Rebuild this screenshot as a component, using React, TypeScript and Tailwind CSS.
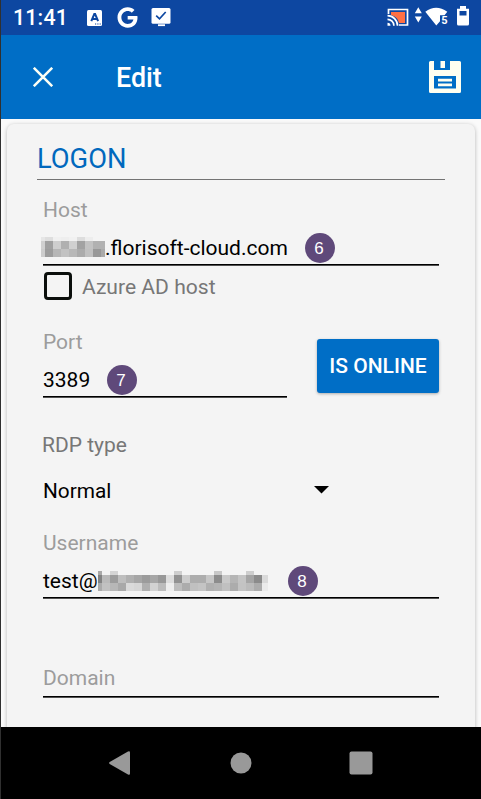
import React from "react";
import { FaGoogle } from "react-icons/fa";

type Cell = [number, number, number, number, string];

const hostCells: Cell[] = [
  [0, 0, 4, 4, "#e6e6e6"], [4, 0, 8, 4, "#dedede"], [12, 0, 8, 4, "#f0f0f0"], [20, 0, 8, 4, "#eeeeee"],
  [28, 0, 8, 4, "#f1f1f1"], [36, 0, 8, 4, "#dddddd"], [44, 0, 8, 4, "#ededed"],
  [0, 4, 4, 8, "#d0d0d0"], [4, 4, 8, 8, "#a0a0a0"], [12, 4, 8, 8, "#cecece"], [20, 4, 8, 8, "#b0b0b0"],
  [28, 4, 8, 8, "#d0d0d0"], [36, 4, 8, 8, "#a2a2a2"], [44, 4, 8, 8, "#c2c2c2"], [52, 4, 12, 8, "#b1b1b1"],
  [0, 12, 4, 8, "#cccccc"], [4, 12, 8, 8, "#9c9c9c"], [12, 12, 8, 8, "#b6b6b6"], [20, 12, 8, 8, "#c2c2c2"],
  [28, 12, 8, 8, "#b8b8b8"], [36, 12, 8, 8, "#ababab"], [44, 12, 8, 8, "#c0c0c0"], [52, 12, 8, 8, "#989898"],
  [60, 12, 4, 8, "#aaaaaa"],
];

const userCells: Cell[] = [
  [0, 0, 4, 4, "#a9a9a9"], [12, 0, 8, 4, "#d4d4d4"], [76, 0, 8, 4, "#cecece"], [116, 0, 8, 4, "#c8c8c8"], [148, 0, 8, 4, "#cecece"],
  [0, 4, 4, 8, "#838383"], [4, 4, 8, 8, "#bababa"], [12, 4, 8, 8, "#9c9c9c"], [20, 4, 8, 8, "#bebebe"],
  [28, 4, 8, 8, "#b0b0b0"], [36, 4, 8, 8, "#a6a6a6"], [44, 4, 8, 8, "#9b9b9b"], [52, 4, 8, 8, "#a6a6a6"],
  [60, 4, 8, 8, "#989898"], [68, 4, 8, 8, "#dddddd"], [76, 4, 8, 8, "#929292"], [84, 4, 8, 8, "#cccccc"],
  [92, 4, 16, 8, "#adadad"], [108, 4, 8, 8, "#c6c6c6"], [116, 4, 8, 8, "#8c8c8c"], [124, 4, 8, 8, "#c9c9c9"],
  [132, 4, 8, 8, "#b5b5b5"], [140, 4, 8, 8, "#c4c4c4"], [148, 4, 8, 8, "#a5a5a5"], [156, 4, 8, 8, "#8b8b8b"],
  [164, 4, 6, 8, "#dadada"],
  [0, 12, 4, 8, "#aaaaaa"], [4, 12, 8, 8, "#c1c1c1"], [12, 12, 8, 8, "#b7b7b7"], [20, 12, 8, 8, "#a9a9a9"],
  [28, 12, 8, 8, "#dadada"], [36, 12, 8, 8, "#d6d6d6"], [44, 12, 8, 8, "#afafaf"], [52, 12, 8, 8, "#d2d2d2"],
  [60, 12, 8, 8, "#bcbcbc"], [68, 12, 8, 8, "#eeeeee"], [76, 12, 8, 8, "#bdbdbd"], [84, 12, 8, 8, "#acacac"],
  [92, 12, 8, 8, "#c0c0c0"], [100, 12, 8, 8, "#c4c4c4"], [108, 12, 8, 8, "#b0b0b0"], [116, 12, 8, 8, "#b4b4b4"],
  [124, 12, 8, 8, "#c0c0c0"], [132, 12, 8, 8, "#acacac"], [140, 12, 8, 8, "#c3c3c3"], [148, 12, 8, 8, "#bbbbbb"],
  [156, 12, 8, 8, "#acacac"], [164, 12, 6, 8, "#ebebeb"],
];

function Mosaic({ cells, width }: { cells: Cell[]; width: number }) {
  return (
    <svg width={width} height="20" shapeRendering="crispEdges" className="shrink-0">
      {cells.map(([x, y, w, h, fill], i) => (
        <rect key={i} x={x} y={y} width={w} height={h} fill={fill} />
      ))}
    </svg>
  );
}

function Badge({ n }: { n: number }) {
  return (
    <span className="flex size-[30px] shrink-0 items-center justify-center rounded-full bg-[#5f497a] pr-px font-['Liberation_Sans',sans-serif] text-[17px] leading-none text-white">
      {n}
    </span>
  );
}

function Label({ children }: { children: React.ReactNode }) {
  return <div className="h-6 text-[21px] leading-6 text-[#9c9c9c]">{children}</div>;
}

function Field({ children }: { children: React.ReactNode }) {
  return (
    <div className="mb-px flex h-[43px] items-center border-b border-black pt-[10px] shadow-[0_1px_0_#505050]">
      {children}
    </div>
  );
}

function StatusBar() {
  return (
    <header className="flex h-[35px] shrink-0 items-center bg-[#0d47a1] pl-3 text-white">
      <span className="w-[74px] whitespace-nowrap text-[21.3px] font-medium leading-none tracking-[0.2px]">11:41</span>
      <svg width="15" height="16" viewBox="0 0 15 16">
        <rect width="15" height="16" rx="1.5" fill="white" />
        <path d="M4.3 11.2 7.3 4h.8l3 7.2M5.6 9h4.2" fill="none" stroke="#0d47a1" strokeWidth="2" />
        <path d="M8 14h1.2M10.3 14h1.2M12.6 14h1.2" stroke="#0d47a1" strokeWidth="1.2" />
      </svg>
      <FaGoogle size={21} className="ml-[15px]" />
      <svg width="20" height="19" viewBox="0 0 20 19" className="ml-[13px]">
        <rect x="0.5" width="19" height="15.7" rx="1.5" fill="white" />
        <path d="m5.2 7.6 3.3 3.2L14.7 4" fill="none" stroke="#0d47a1" strokeWidth="1.7" />
        <path d="M7 17.2h7" stroke="white" strokeWidth="1.8" />
      </svg>
      <svg width="93" height="35" viewBox="380 0 93 35" className="ml-auto mr-2">
        <path d="M388.5 14v-4.5h19v15.5H399" fill="none" stroke="white" strokeWidth="1.7" />
        <path d="M391 12h14v11h-6q-1-6-8-8z" fill="#ff7043" />
        <path d="M387.5 15.7a10 10 0 0 1 10 10M387.5 19.3a6.4 6.4 0 0 1 6.4 6.4" fill="none" stroke="white" strokeWidth="1.7" />
        <path d="M387.5 22.7a3 3 0 0 1 3 3h-3z" fill="white" />
        <path d="m414.8 13.2 3.5-6 3.5 6zM414.8 16.5l3.5 6 3.5-6z" fill="white" />
        <path d="M425.3 11.7Q436 4 447.3 11.7L444.5 15.2H440v6L436.3 25.5z" fill="white" />
        <text x="441.3" y="24" fontSize="11" fontWeight="700" fill="white">5</text>
        <path d="M460 6h6v2.7h3V24q0 1.5-1.5 1.5h-9Q457 25.5 457 24V8.7h3z" fill="white" />
        <path d="M459.5 11h7v4.5h-7z" fill="#0d47a1" />
      </svg>
    </header>
  );
}

function AppBar() {
  return (
    <div className="flex h-[84px] shrink-0 items-center bg-[#006ec6] pl-8 pr-5 text-white">
      <svg width="20" height="20" viewBox="0 0 20 20">
        <path d="m.8.8 18.4 18.4M19.2.8.8 19.2" stroke="#fcfff5" strokeWidth="2.5" />
      </svg>
      <h1 className="ml-[63px] pt-0.5 text-[26.8px] font-medium leading-none">Edit</h1>
      <svg width="32" height="32" viewBox="0 0 32 32" className="ml-auto">
        <path d="M1.5 0H5v9h16V0h9.5Q32 0 32 1.5v29Q32 32 30.5 32h-29Q0 32 0 30.5v-29Q0 0 1.5 0zM5 15v12.5h22V15z" fill="#fffff0" fillRule="evenodd" />
        <path d="M11.5 0H16v7h-4.5zM9 17.8h14v2.7H9zM9 22.5h14v2.7H9z" fill="#fffff0" />
      </svg>
    </div>
  );
}

function LogonForm() {
  return (
    <section className="h-[620px] w-[468px] rounded-[7px] bg-[#f4f4f4] px-[30px] pt-[18px] shadow-[0_1px_4px_rgba(0,0,0,0.28)]">
      <h2 className="h-[38px] border-b border-[#737373] text-[27.3px] leading-[35px] text-[#0068bd]">LOGON</h2>
      <div className="px-[6px] pt-[18px]">
        <Label>Host</Label>
        <Field>
          <div className="-ml-0.5 flex items-center">
            <div className="-mt-0.5">
              <Mosaic cells={hostCells} width={64} />
            </div>
            <span className="w-[184px] whitespace-nowrap text-[21px] leading-6 text-black">.florisoft-cloud.com</span>
          </div>
          <div className="ml-[15.5px]">
            <Badge n={6} />
          </div>
        </Field>
        <div className="flex h-[42px] items-center">
          <span className="-mt-0.5 ml-px size-7 rounded-[4px] border-[3px] border-[#0b0f0c]" />
          <span className="pl-[10px] text-[21.1px] leading-6 text-[#777]">Azure AD host</span>
        </div>
        <div className="flex pt-[22px]">
          <div className="w-[244px]">
            <Label>Port</Label>
            <Field>
              <span className="w-[63.5px] text-[21px] leading-6 text-black">3389</span>
              <Badge n={7} />
            </Field>
          </div>
          <button className="ml-[30px] mt-[9px] h-[54px] w-[122px] whitespace-nowrap rounded-[3px] bg-[#006ec6] pt-0.5 text-[21px] font-medium text-white shadow-[0_1px_3px_rgba(0,0,0,0.3)]">
            IS ONLINE
          </button>
        </div>
        <div className="mt-[35px] -ml-px h-6 text-[21px] leading-6 text-[#777]">RDP type</div>
        <div className="mt-[22px] flex h-6 items-center">
          <span className="w-[271px] text-[20.8px] leading-6 text-black">Normal</span>
          <svg width="15" height="8" viewBox="0 0 15 8" className="-mt-0.5">
            <path d="M0 0h15L7.5 7.5z" />
          </svg>
        </div>
        <div className="mt-7">
          <Label>Username</Label>
        </div>
        <Field>
          <span className="w-[55px] whitespace-nowrap text-[21px] leading-6 text-black">test@</span>
          <Mosaic cells={userCells} width={170} />
          <div className="ml-[19.5px]">
            <Badge n={8} />
          </div>
        </Field>
        <div className="mt-[68px] h-[31px] border-b border-black shadow-[0_1px_0_#505050]">
          <Label>Domain</Label>
        </div>
      </div>
    </section>
  );
}

export default function App() {
  return (
    <div className="flex h-[799px] w-[481px] flex-col overflow-hidden border-l border-[#303030] bg-[#fafafa] font-[Roboto,sans-serif]">
      <StatusBar />
      <AppBar />
      <main className="h-[608px] shrink-0 overflow-hidden pl-1.5 pt-[5px]">
        <LogonForm />
      </main>
      <nav className="flex h-[72px] shrink-0 items-center bg-black pl-[108px]">
        <svg width="264" height="24" viewBox="0 0 264 24" fill="#999">
          <path d="M.7 11 19 .4Q21 -.4 21 1.5v21Q21 24.4 19 23.6L.7 13Q-.5 12 .7 11z" />
          <circle cx="132" cy="12" r="10.5" />
          <rect x="240.5" y=".5" width="23" height="23" rx="2" />
        </svg>
      </nav>
    </div>
  );
}
